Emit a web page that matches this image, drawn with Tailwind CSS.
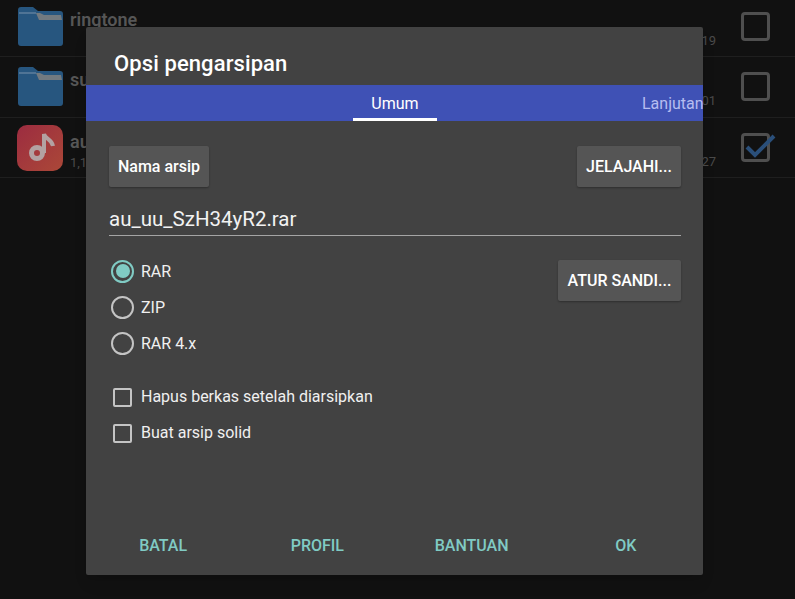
<!DOCTYPE html>
<html>
<head>
<meta charset="utf-8">
<script src="https://cdn.jsdelivr.net/npm/@tailwindcss/browser@4"></script>
</head>
<body class="m-0">
<div class="relative w-[795px] h-[599px] overflow-hidden bg-[#111111] font-['Roboto',sans-serif]">
  <!-- background list -->
  <div class="flex flex-col">
    <div class="flex h-[57px] items-center border-b border-[#1f1f1f] pl-[18px] pr-[25px]">
      <svg width="45" height="39" viewBox="0 0 45 39" class="-mt-[4px]"><path d="M3 0h12l5 4h22a3 3 0 0 1 3 3v29a3 3 0 0 1-3 3H3a3 3 0 0 1-3-3V3a3 3 0 0 1 3-3z" fill="#27567f"/><path d="M1 6h17" fill="none" stroke="#5f7f9c" stroke-width="1.5"/><path d="M18 6h4l4 2h17l1 5H21z" fill="#727a80"/></svg>
      <span class="ml-[7px] -mt-[18px] text-[18px] font-semibold text-[#565656]">ringtone</span>
      <span class="ml-auto mt-[26px] mr-[25px] text-[13px] text-[#4a4a4a]">19</span>
      <span class="-mt-[4px] w-[29px] h-[29px] rounded-[4px] border-[3px] border-[#4f4f4f]"></span>
    </div>
    <div class="flex h-[61px] items-center border-b border-[#1f1f1f] pl-[18px] pr-[25px]">
      <svg width="45" height="39" viewBox="0 0 45 39" class="-mt-[1px]"><path d="M3 0h12l5 4h22a3 3 0 0 1 3 3v29a3 3 0 0 1-3 3H3a3 3 0 0 1-3-3V3a3 3 0 0 1 3-3z" fill="#27567f"/><path d="M1 6h17" fill="none" stroke="#5f7f9c" stroke-width="1.5"/><path d="M18 6h4l4 2h17l1 5H21z" fill="#727a80"/></svg>
      <span class="ml-[7px] -mt-[15px] text-[18px] font-semibold text-[#565656]">su</span>
      <span class="ml-auto mt-[28px] mr-[25px] text-[13px] text-[#4a4a4a]">01</span>
      <span class="-mt-[2px] w-[29px] h-[29px] rounded-[4px] border-[3px] border-[#4f4f4f]"></span>
    </div>
    <div class="flex h-[60px] items-center border-b border-[#1f1f1f] pl-[17px] pr-[25px]">
      <svg width="46" height="46" viewBox="0 0 46 46"><defs><linearGradient id="g" x1="0" y1="0" x2="1" y2="1"><stop offset="0" stop-color="#9c2c40"/><stop offset="1" stop-color="#ab4838"/></linearGradient></defs><rect width="46" height="46" rx="10" fill="url(#g)"/><circle cx="20" cy="28" r="5.5" fill="none" stroke="#b3a2a2" stroke-width="5"/><path d="M27 28V9c1 5 8 5 9 12" fill="none" stroke="#b3a2a2" stroke-width="4"/></svg>
      <div class="ml-[7px] mt-[6px] flex flex-col leading-none">
        <span class="text-[18px] font-semibold text-[#565656]">au</span>
        <span class="mt-[5px] text-[13px] text-[#4a4a4a]">1,1</span>
      </div>
      <span class="ml-auto mt-[28px] mr-[25px] text-[13px] text-[#4a4a4a]">27</span>
      <span class="relative w-[29px] h-[29px] rounded-[4px] border-[3px] border-[#4f4f4f]">
        <svg width="34" height="30" viewBox="0 0 34 30" class="absolute -left-[1px] -top-[6px]"><path d="M4 17l8 8L31 6" fill="none" stroke="#2a4f7a" stroke-width="4"/></svg>
      </span>
    </div>
  </div>

  <!-- dialog -->
  <div class="absolute left-[86px] top-[27px] w-[617px] h-[548px] rounded-[2px] bg-[#424242] flex flex-col overflow-hidden shadow-lg">
    <div class="h-[58px] shrink-0 pl-[28px] pt-[23px] text-[22px] leading-[28px] font-medium tracking-[0.1px] text-white">Opsi pengarsipan</div>
    <div class="relative h-[36px] shrink-0 bg-[#3f51b5] overflow-hidden">
      <div class="absolute left-[267px] top-0 w-[84px] h-[36px] border-b-[3px] border-white text-center text-[16px] leading-[38px] text-white">Umum</div>
      <div class="absolute left-[556px] top-0 text-[16px] leading-[38px] whitespace-nowrap text-[#b6bdf0]">Lanjutan</div>
    </div>
    <div class="flex-1 flex flex-col pl-[23px] pr-[22px]">
      <div class="flex justify-between mt-[25px]">
        <button class="w-[100px] h-[41px] pt-[1px] rounded-[2px] bg-[#555555] shadow-[0_1px_2px_rgba(0,0,0,0.3)] text-[16px] font-medium text-white">Nama arsip</button>
        <button class="w-[104px] h-[41px] pt-[1px] rounded-[2px] bg-[#555555] shadow-[0_1px_2px_rgba(0,0,0,0.3)] text-[16px] font-medium text-white">JELAJAHI...</button>
      </div>
      <div class="mt-[18px] h-[31px] border-b-[1.5px] border-[#a5a5a5] text-[20.5px] leading-[29px] text-[#f2f2f2]">au_uu_SzH34yR2.rar</div>
      <div class="flex justify-between mt-[17px]">
        <div class="flex flex-col pl-[2px]">
          <div class="flex items-center h-[36px] gap-[7px]">
            <span class="flex items-center justify-center w-[23px] h-[23px] rounded-full border-[2px] border-[#80cbc4]"><span class="w-[14px] h-[14px] rounded-full bg-[#80cbc4]"></span></span>
            <span class="pt-[2px] text-[16px] text-[#f0f0f0]">RAR</span>
          </div>
          <div class="flex items-center h-[36px] gap-[7px]">
            <span class="w-[23px] h-[23px] rounded-full border-[2px] border-[#c4c4c4]"></span>
            <span class="pt-[2px] text-[16px] text-[#f0f0f0]">ZIP</span>
          </div>
          <div class="flex items-center h-[36px] gap-[7px]">
            <span class="w-[23px] h-[23px] rounded-full border-[2px] border-[#c4c4c4]"></span>
            <span class="pt-[2px] text-[16px] text-[#f0f0f0]">RAR 4.x</span>
          </div>
        </div>
        <button class="mt-[7px] w-[123px] h-[41px] pt-[1px] rounded-[2px] bg-[#555555] shadow-[0_1px_2px_rgba(0,0,0,0.3)] text-[16px] font-medium text-white">ATUR SANDI...</button>
      </div>
      <div class="flex flex-col pl-[4px] mt-[18px]">
        <div class="flex items-center h-[36px] gap-[9px]">
          <span class="w-[19px] h-[19px] rounded-[2px] border-[2px] border-[#c4c4c4]"></span>
          <span class="text-[16px] text-[#f0f0f0]">Hapus berkas setelah diarsipkan</span>
        </div>
        <div class="flex items-center h-[36px] gap-[9px]">
          <span class="w-[19px] h-[19px] rounded-[2px] border-[2px] border-[#c4c4c4]"></span>
          <span class="text-[16px] text-[#f0f0f0]">Buat arsip solid</span>
        </div>
      </div>
    </div>
    <div class="grid grid-cols-4 h-[60px] pt-[2px] shrink-0 text-center text-[16px] font-medium leading-[58px] text-[#80cbc4]">
      <span>BATAL</span><span>PROFIL</span><span>BANTUAN</span><span>OK</span>
    </div>
  </div>
</div>
</body>
</html>
